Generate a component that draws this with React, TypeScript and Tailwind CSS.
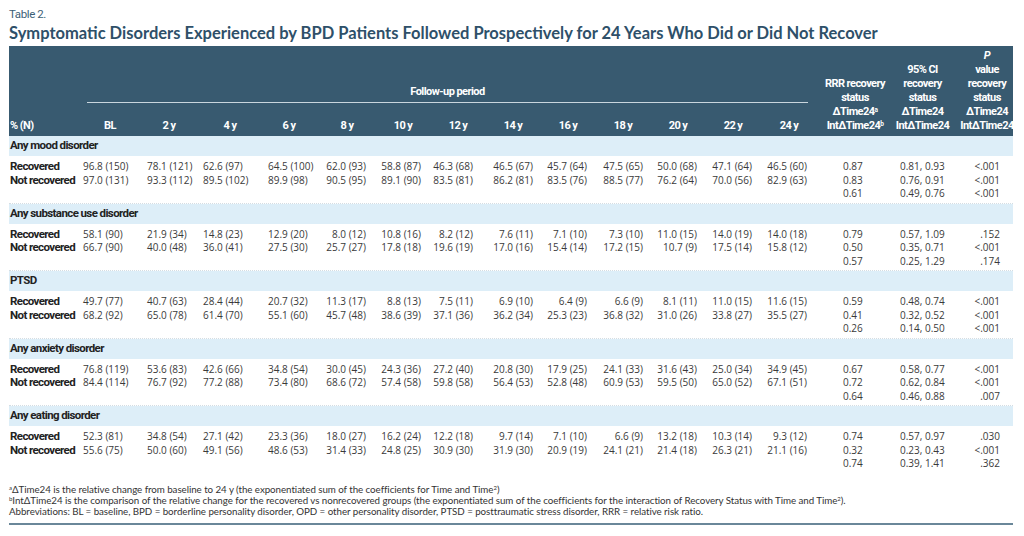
import React from "react";

const COND = "[font-family:'Roboto',sans-serif]";
const BODY = "[font-family:'Open_Sans',sans-serif]";

type Stat = [string, string, string];
type Section = { name: string; r: string[]; nr: string[]; stats: Stat[] };

const sections: Section[] = [
  {
    name: "Any mood disorder",
    r: ["96.8 (150)", "78.1 (121)", "62.6 (97)", "64.5 (100)", "62.0 (93)", "58.8 (87)", "46.3 (68)", "46.5 (67)", "45.7 (64)", "47.5 (65)", "50.0 (68)", "47.1 (64)", "46.5 (60)"],
    nr: ["97.0 (131)", "93.3 (112)", "89.5 (102)", "89.9 (98)", "90.5 (95)", "89.1 (90)", "83.5 (81)", "86.2 (81)", "83.5 (76)", "88.5 (77)", "76.2 (64)", "70.0 (56)", "82.9 (63)"],
    stats: [["0.87", "0.81, 0.93", "<.001"], ["0.83", "0.76, 0.91", "<.001"], ["0.61", "0.49, 0.76", "<.001"]],
  },
  {
    name: "Any substance use disorder",
    r: ["58.1 (90)", "21.9 (34)", "14.8 (23)", "12.9 (20)", "8.0 (12)", "10.8 (16)", "8.2 (12)", "7.6 (11)", "7.1 (10)", "7.3 (10)", "11.0 (15)", "14.0 (19)", "14.0 (18)"],
    nr: ["66.7 (90)", "40.0 (48)", "36.0 (41)", "27.5 (30)", "25.7 (27)", "17.8 (18)", "19.6 (19)", "17.0 (16)", "15.4 (14)", "17.2 (15)", "10.7 (9)", "17.5 (14)", "15.8 (12)"],
    stats: [["0.79", "0.57, 1.09", ".152"], ["0.50", "0.35, 0.71", "<.001"], ["0.57", "0.25, 1.29", ".174"]],
  },
  {
    name: "PTSD",
    r: ["49.7 (77)", "40.7 (63)", "28.4 (44)", "20.7 (32)", "11.3 (17)", "8.8 (13)", "7.5 (11)", "6.9 (10)", "6.4 (9)", "6.6 (9)", "8.1 (11)", "11.0 (15)", "11.6 (15)"],
    nr: ["68.2 (92)", "65.0 (78)", "61.4 (70)", "55.1 (60)", "45.7 (48)", "38.6 (39)", "37.1 (36)", "36.2 (34)", "25.3 (23)", "36.8 (32)", "31.0 (26)", "33.8 (27)", "35.5 (27)"],
    stats: [["0.59", "0.48, 0.74", "<.001"], ["0.41", "0.32, 0.52", "<.001"], ["0.26", "0.14, 0.50", "<.001"]],
  },
  {
    name: "Any anxiety disorder",
    r: ["76.8 (119)", "53.6 (83)", "42.6 (66)", "34.8 (54)", "30.0 (45)", "24.3 (36)", "27.2 (40)", "20.8 (30)", "17.9 (25)", "24.1 (33)", "31.6 (43)", "25.0 (34)", "34.9 (45)"],
    nr: ["84.4 (114)", "76.7 (92)", "77.2 (88)", "73.4 (80)", "68.6 (72)", "57.4 (58)", "59.8 (58)", "56.4 (53)", "52.8 (48)", "60.9 (53)", "59.5 (50)", "65.0 (52)", "67.1 (51)"],
    stats: [["0.67", "0.58, 0.77", "<.001"], ["0.72", "0.62, 0.84", "<.001"], ["0.64", "0.46, 0.88", ".007"]],
  },
  {
    name: "Any eating disorder",
    r: ["52.3 (81)", "34.8 (54)", "27.1 (42)", "23.3 (36)", "18.0 (27)", "16.2 (24)", "12.2 (18)", "9.7 (14)", "7.1 (10)", "6.6 (9)", "13.2 (18)", "10.3 (14)", "9.3 (12)"],
    nr: ["55.6 (75)", "50.0 (60)", "49.1 (56)", "48.6 (53)", "31.4 (33)", "24.8 (25)", "30.9 (30)", "31.9 (30)", "20.9 (19)", "24.1 (21)", "21.4 (18)", "26.3 (21)", "21.1 (16)"],
    stats: [["0.74", "0.57, 0.97", ".030"], ["0.32", "0.23, 0.43", "<.001"], ["0.74", "0.39, 1.41", ".362"]],
  },
];

const years = ["BL", "2 y", "4 y", "6 y", "8 y", "10 y", "12 y", "14 y", "16 y", "18 y", "20 y", "22 y", "24 y"];

const ROWGRID =
  "grid grid-cols-[74px_64px_56px_65px_48px_50px_55px_52px_60px_54px_56px_54px_55px_55px_83px_65px_58px] h-[13.5px] items-center leading-[13.5px]";

const DATA = `${BODY} text-[10px] text-[#3a3a3a] whitespace-nowrap`;
const LABEL = `${COND} font-bold text-[11.5px] tracking-[-0.6px] text-[#222] whitespace-nowrap`;

function DataRow({ label, vals, stat }: { label: string; vals: string[] | null; stat: Stat }) {
  return (
    <div className={ROWGRID}>
      <div className={`${LABEL} pl-[1px]`}>{label}</div>
      {years.map((_, i) => (
        <div key={i} className={`${DATA} ${i < 4 ? "text-left" : "text-right"}`}>
          {vals ? vals[i] : ""}
        </div>
      ))}
      <div className={`${DATA} pl-[36px]`}>{stat[0]}</div>
      <div className={`${DATA} pl-[10px]`}>{stat[1]}</div>
      <div className={`${DATA} pr-[13px] text-right`}>{stat[2]}</div>
    </div>
  );
}

export default function App() {
  return (
    <div className="w-[1024px] h-[536px] bg-white pl-[9px] pr-[11px] pt-[6px] overflow-hidden">
      <div className={`${COND} text-[11.5px] tracking-[-0.4px] leading-[16px] text-[#3d5f77]`}>Table 2.</div>
      <div className="[font-family:'Lato',sans-serif] font-bold text-[16.5px] leading-[18px] mt-[2px] text-[#2e5069] whitespace-nowrap">
        Symptomatic Disorders Experienced by BPD Patients Followed Prospectively for 24 Years Who Did or Did Not Recover
      </div>

      {/* Header */}
      <div
        className={`${COND} mt-[4px] h-[90px] bg-[#385a70] text-white font-bold text-[11px] tracking-[-0.55px] leading-[14px] flex pb-[3px]`}
      >
        <div className="w-[74px] flex items-end pl-[1px]">% (N)</div>
        <div className="w-[737px] flex flex-col justify-end">
          <div className="ml-[4px] w-[721px] text-center">Follow-up period</div>
          <div className="ml-[4px] w-[721px] h-px bg-[#c9d6de] mt-[3px]" />
          <div className="mt-[16px] grid grid-cols-[54px_64px_58px_60px_56px_56px_54px_56px_54px_56px_54px_56px_56px]">
            {years.map((y) => (
              <div key={y} className="text-center">
                {y}
              </div>
            ))}
          </div>
        </div>
        <div className="w-[70px] flex flex-col justify-end items-center text-center whitespace-nowrap">
          <div>RRR recovery</div>
          <div>status</div>
          <div>
            ΔTime24<sup className="text-[6.5px]">a</sup>
          </div>
          <div>
            IntΔTime24<sup className="text-[6.5px]">b</sup>
          </div>
        </div>
        <div className="w-[65px] flex flex-col justify-end items-center text-center whitespace-nowrap">
          <div>95% CI</div>
          <div>recovery</div>
          <div>status</div>
          <div>ΔTime24</div>
          <div>IntΔTime24</div>
        </div>
        <div className="w-[58px] flex flex-col justify-end items-center text-center pl-[6px] whitespace-nowrap">
          <div className="italic">P</div>
          <div>value</div>
          <div>recovery</div>
          <div>status</div>
          <div>ΔTime24</div>
          <div>IntΔTime24</div>
        </div>
      </div>

      {/* Body */}
      {sections.map((s, si) => (
        <div key={s.name} className={si > 0 ? "border-t border-dotted border-[#d4dde3]" : ""}>
          <div className={`${LABEL} h-[20px] bg-[#ddeef8] flex items-center pl-[1px]`}>{s.name}</div>
          <div className="pt-[4px] pb-[2px]">
            <DataRow label="Recovered" vals={s.r} stat={s.stats[0]} />
            <DataRow label="Not recovered" vals={s.nr} stat={s.stats[1]} />
            <DataRow label="" vals={null} stat={s.stats[2]} />
          </div>
        </div>
      ))}

      {/* Footnotes */}
      <div className="[font-family:'Lato',sans-serif] mt-[11px] text-[9.75px] leading-[11px] text-[#333] whitespace-nowrap tracking-[-0.05px]">
        <div>
          <sup className="text-[6px]">a</sup>ΔTime24 is the relative change from baseline to 24 y (the exponentiated sum of the coefficients for Time and Time
          <sup className="text-[6px]">2</sup>)
        </div>
        <div>
          <sup className="text-[6px]">b</sup>IntΔTime24 is the comparison of the relative change for the recovered vs nonrecovered groups (the exponentiated sum of the coefficients for the interaction of Recovery Status with Time and Time
          <sup className="text-[6px]">2</sup>).
        </div>
        <div>
          Abbreviations: BL = baseline, BPD = borderline personality disorder, OPD = other personality disorder, PTSD = posttraumatic stress disorder, RRR = relative risk ratio.
        </div>
      </div>
      <div className="mt-[6px] h-[2px] bg-[#6a8799]" />
    </div>
  );
}
